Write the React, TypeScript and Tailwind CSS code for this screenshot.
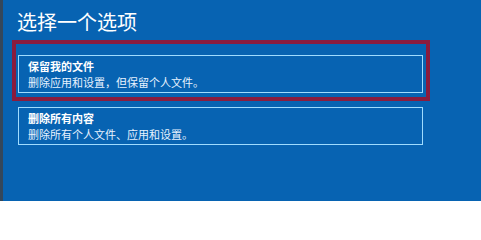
import React from "react";

const font = { fontFamily: '"Noto Sans CJK SC", "Noto Sans", sans-serif' };

function Option({ title, desc }: { title: string; desc: string }) {
  return (
    <div className="w-[405px] h-[38px] border border-[#9fdcff] pl-[9px] pt-[2px] flex flex-col">
      <div className="text-[11px] leading-[16px] font-bold text-white">{title}</div>
      <div className="text-[11px] leading-[16px] text-[#e6f2ff]">{desc}</div>
    </div>
  );
}

export default function App() {
  return (
    <div className="w-[481px] h-[201px] flex overflow-hidden" style={font}>
      <div className="w-[3px] h-full bg-[#34475a]" />
      <div className="relative flex-1 h-full bg-[#0763b2] flex flex-col pl-[15px] pt-[9px]">
        <div className="text-[20px] leading-[26px] text-white -ml-[1px]">选择一个选项</div>
        <div className="mt-[20px] flex flex-col gap-[14px]">
          <Option title="保留我的文件" desc="删除应用和设置，但保留个人文件。" />
          <Option title="删除所有内容" desc="删除所有个人文件、应用和设置。" />
        </div>
        <div className="absolute left-[9px] top-[40px] w-[418px] h-[61px] border-[4px] border-[#8a1c3e]" />
      </div>
    </div>
  );
}
